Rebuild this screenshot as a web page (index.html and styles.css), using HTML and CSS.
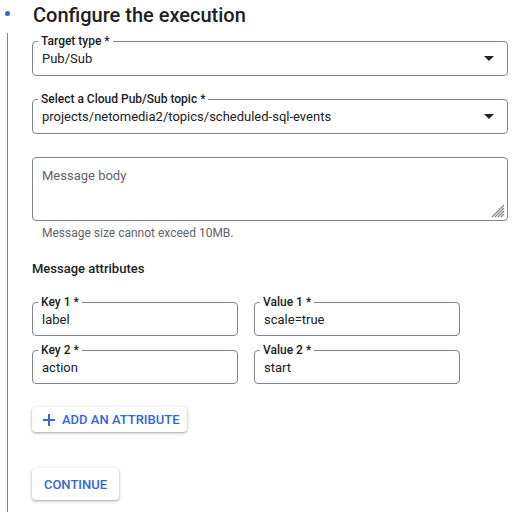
FILE: index.html
```html
<!DOCTYPE html>
<html>
<head>
<meta charset="utf-8">
<link rel="stylesheet" href="styles.css">
</head>
<body>
<div class="step">
  <div class="rail">
    <span class="dot"></span>
    <span class="line"></span>
  </div>
  <div class="content">
    <h2 class="title">Configure the execution</h2>

    <div class="field select first">
      <label class="flabel">Target type *</label>
      <span class="value">Pub/Sub</span>
      <span class="arrow"></span>
    </div>

    <div class="field select">
      <label class="flabel">Select a Cloud Pub/Sub topic *</label>
      <span class="value">projects/netomedia2/topics/scheduled-sql-events</span>
      <span class="arrow"></span>
    </div>

    <div class="field area">
      <span class="placeholder">Message body</span>
      <svg class="resizer" width="14" height="14" viewBox="0 0 14 14">
        <g stroke="#8a8a8a" stroke-width="1.2">
          <line x1="13" y1="1" x2="1" y2="13"/>
          <line x1="13" y1="4" x2="4" y2="13"/>
          <line x1="13" y1="7" x2="7" y2="13"/>
          <line x1="13" y1="10" x2="10" y2="13"/>
        </g>
      </svg>
    </div>
    <div class="hint">Message size cannot exceed 10MB.</div>

    <div class="subhead">Message attributes</div>

    <div class="attrs">
      <div class="field small"><label class="flabel">Key 1 *</label><span class="value">label</span></div>
      <div class="field small"><label class="flabel">Value 1 *</label><span class="value">scale=true</span></div>
      <div class="field small"><label class="flabel">Key 2 *</label><span class="value">action</span></div>
      <div class="field small"><label class="flabel">Value 2 *</label><span class="value">start</span></div>
    </div>

    <button class="btn add">
      <svg width="12" height="12" viewBox="0 0 12 12"><path d="M6 0v12M0 6h12" stroke="currentColor" stroke-width="2"/></svg>
      <span>ADD AN ATTRIBUTE</span>
    </button>

    <button class="btn continue">CONTINUE</button>
  </div>
</div>
</body>
</html>
```
FILE: styles.css
```css
* { box-sizing: border-box; }
html, body {
  margin: 0;
  padding: 0;
  background: #fff;
  font-family: Roboto, "Liberation Sans", Arial, sans-serif;
  color: #202124;
}
.step {
  display: flex;
  height: 512px;
  overflow: hidden;
}
.rail {
  width: 15px;
  display: flex;
  flex-direction: column;
  align-items: center;
  padding-top: 11px;
}
.dot {
  width: 5px;
  height: 5px;
  border-radius: 50%;
  background: #3367d6;
}
.line {
  width: 1px;
  flex: 1;
  margin-top: 17px;
  background: #80868b;
}
.content {
  margin-left: 17px;
  width: 476px;
  display: flex;
  flex-direction: column;
  align-items: flex-start;
}
.title {
  margin: 1px 0 0 1px;
  font-size: 20px;
  line-height: 28px;
  font-weight: 500;
  color: #202124;
}
.field {
  position: relative;
  border: 1px solid #80868b;
  border-radius: 4px;
  height: 35px;
  width: 100%;
  padding: 0 13px 0 9px;
  display: flex;
  align-items: center;
  font-size: 13px;
  margin-top: 23px;
}
.field.first { margin-top: 12px; }
.flabel {
  position: absolute;
  left: 5px;
  top: -8px;
  padding: 0 3px;
  background: #fff;
  font-size: 12px;
  line-height: 14px;
  font-weight: 500;
  color: #202124;
}
.value { color: #202124; }
.arrow {
  margin-left: auto;
  width: 0;
  height: 0;
  border-left: 5px solid transparent;
  border-right: 5px solid transparent;
  border-top: 5px solid #202124;
}
.area {
  height: 64px;
  align-items: flex-start;
  padding-top: 10px;
}
.placeholder { color: #5f6368; }
.resizer {
  position: absolute;
  right: 2px;
  bottom: 2px;
}
.hint {
  margin: 4px 0 0 10px;
  font-size: 12px;
  line-height: 16px;
  color: #5f6368;
}
.subhead {
  margin-top: 18px;
  font-size: 13px;
  line-height: 20px;
  font-weight: 500;
  color: #202124;
}
.attrs {
  margin-top: 23px;
  display: grid;
  grid-template-columns: 206px 206px;
  column-gap: 16px;
  row-gap: 14px;
}
.attrs .field {
  margin-top: 0;
  height: 34px;
}
.btn {
  font-family: inherit;
  border: none;
  background: #fff;
  border-radius: 4px;
  box-shadow: 0 1px 2px 0 rgba(60,64,67,.3), 0 1px 3px 1px rgba(60,64,67,.15);
  color: #3367d6;
  font-weight: 500;
  font-size: 13px;
  cursor: pointer;
}
.add {
  margin-top: 23px;
  height: 25px;
  width: 155px;
  padding: 0 0 0 11px;
  display: flex;
  align-items: center;
  gap: 7px;
}
.continue {
  margin-top: 36px;
  height: 32px;
  width: 87px;
  padding: 0;
}
```
